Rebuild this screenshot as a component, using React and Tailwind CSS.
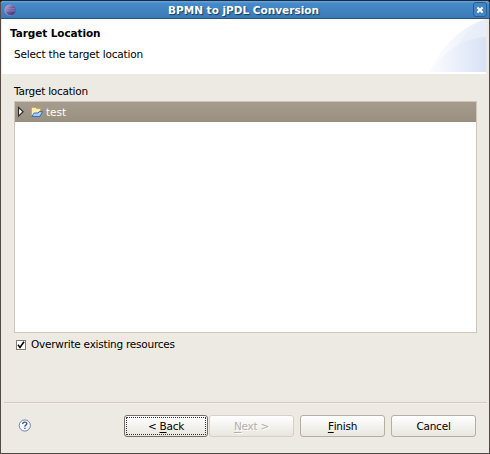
const font = "font-['DejaVu_Sans',sans-serif]";

function EclipseIcon() {
  return (
    <svg width="13" height="12" viewBox="0 0 13 12" className="mt-px ml-[3px] shrink-0">
      <defs>
        <linearGradient id="orb" x1="0" y1="0" x2="1" y2="1">
          <stop offset="0" stopColor="#c9b8d8" />
          <stop offset="0.5" stopColor="#6a589e" />
          <stop offset="1" stopColor="#3a2f6e" />
        </linearGradient>
      </defs>
      <ellipse cx="6" cy="6" rx="5.6" ry="5.6" fill="#b595b4" />
      <circle cx="6.6" cy="6" r="5.2" fill="url(#orb)" />
      <path d="M2.4 4.8h8.6M2.2 6.9h9" stroke="#9d92c6" strokeWidth="0.8" />
    </svg>
  );
}

function TitleBar() {
  return (
    <div className="flex h-[18px] items-center border-b border-[#25527f] bg-linear-to-b from-[#6ba5de] via-[#448aca] via-15% to-[#3c7ab5]">
      <EclipseIcon />
      <div className="flex-1 pr-[3px] text-center text-[10.5px] leading-[16px] font-bold whitespace-nowrap text-white [text-shadow:1px_1px_1px_#173b60]">
        BPMN to jPDL Conversion
      </div>
      <div className="mr-[2px] flex h-[15px] w-[14px] items-center justify-center rounded-[3px] border border-[#2a5c90] bg-[#4486c4]">
        <svg width="8" height="8" viewBox="0 0 8 8">
          <path d="M1.4 1.4l5.2 5.2M6.6 1.4l-5.2 5.2" stroke="#fff" strokeWidth="2.1" />
        </svg>
      </div>
    </div>
  );
}

function Swoosh() {
  return (
    <svg width="60" height="53" viewBox="0 0 60 54" preserveAspectRatio="none" className="shrink-0">
      <defs>
        <linearGradient id="sw1" x1="0" x2="1">
          <stop offset="0" stopColor="#fff" />
          <stop offset="1" stopColor="#e6ecf8" />
        </linearGradient>
        <linearGradient id="sw2" x1="0" x2="1">
          <stop offset="0" stopColor="#fdfdff" />
          <stop offset="1" stopColor="#d8e2f5" />
        </linearGradient>
      </defs>
      <path d="M2 54C17 26 35 8 60 0V54z" fill="url(#sw1)" />
      <path d="M30 30Q41 9 60 1V20z" fill="#e8eef9" opacity="0.65" />
      <path d="M2 54Q28 20 60 18V54z" fill="url(#sw2)" />
    </svg>
  );
}

function Button({ children, width = "w-[85px]", border = "border-[#b6aea0]", className = "" }) {
  return (
    <div className={`flex h-[22px] items-center justify-center rounded-[3px] border bg-linear-to-b from-white to-[#e9e6df] whitespace-pre ${width} ${border} ${className}`}>
      {children}
    </div>
  );
}

export default function App() {
  return (
    <div className={`h-[454px] w-[490px] bg-[#171717] text-black ${font}`}>
      <div className="flex h-[454px] flex-col overflow-hidden rounded-t-[4px] border border-[#504945] border-t-[#1d2b3b] bg-[#edeae3] text-[10.5px] leading-[14px] tracking-[-0.24px]">
        <div className="tracking-normal">
          <TitleBar />
        </div>
        <div className="mr-[3px] ml-px flex h-[55px] justify-between bg-white">
          <div className="pt-[7px] pl-[8px]">
            <div className="font-bold tracking-[-0.1px]">Target Location</div>
            <div className="mt-[7px] pl-[4px] tracking-[-0.16px]">Select the target location</div>
          </div>
          <Swoosh />
        </div>
        <div className="flex h-[328px] flex-col pr-[12px] pl-[13px]">
          <div className="mt-[10px]">Target location</div>
          <div className="mt-[3px] h-[232px] border border-[#cfc6b8] bg-white">
            <div className="flex h-[20px] items-center bg-linear-to-b from-[#a59c8e] to-[#999080] text-white">
              <svg width="9" height="12" viewBox="0 0 9 12" className="ml-[2px]">
                <path d="M1.5 1.4v8.8l4.6-4.4z" fill="#fff" stroke="#302d28" strokeWidth="1.2" />
              </svg>
              <svg width="14" height="12" viewBox="0 0 14 12" className="ml-[4px]">
                <path d="M1.5 10V2.5l1-1h3l1 1h4v3" fill="#ffedb2" stroke="#d3a850" />
                <path d="M1.8 10.4L4.2 7h4l1-1.4h3.3L10 10.4z" fill="#a9d3fb" stroke="#3867c7" />
              </svg>
              <span className="ml-[2px] tracking-normal">test</span>
            </div>
          </div>
          <div className="mt-[4px] flex items-center">
            <div className="mt-px ml-[2px] flex h-[10px] w-[10px] items-center justify-center border border-[#827b70] bg-white">
              <svg width="8" height="8" viewBox="0 0 8 8">
                <path d="M1 3.8l2 2.7L7 .8" fill="none" stroke="#000" strokeWidth="1.6" />
              </svg>
            </div>
            <span className="ml-[5px]">Overwrite existing resources</span>
          </div>
        </div>
        <div className="mr-[2px] ml-[3px] h-[2px] border-t border-[#d3cbc2] bg-[#f2efe9]" />
        <div className="flex pt-[11px] pr-[13px] pl-[17px]">
          <svg width="13" height="13" viewBox="0 0 13 13" className="mt-[4px]">
            <circle cx="6.8" cy="6.5" r="5.6" fill="#f4f7fb" stroke="#7085a9" />
            <path d="M4.7 5C4.7 2.4 8.9 2.6 8.8 4.8C8.7 6.1 6.9 6.1 6.9 7.7M6.9 8.8v1.3" fill="none" stroke="#405c8c" strokeWidth="1.4" />
          </svg>
          <div className="ml-auto flex">
            <Button width="w-[84px]" border="border-[#766f65]" className="p-px">
              <div className="flex h-full w-full items-center justify-center rounded-[1px] border border-dotted border-[#333]">
                {"< "}<u className="underline-offset-2">B</u>ack
              </div>
            </Button>
            <Button border="border-[#d8d0c6]" className="ml-px text-[#b4b0a9] [text-shadow:1px_1px_0_#fff]">
              <u className="underline-offset-2">N</u>{"ext >"}
            </Button>
            <Button className="ml-[6px]">
              <u className="underline-offset-2">F</u>inish
            </Button>
            <Button className="ml-[6px]">Cancel</Button>
          </div>
        </div>
      </div>
    </div>
  );
}
